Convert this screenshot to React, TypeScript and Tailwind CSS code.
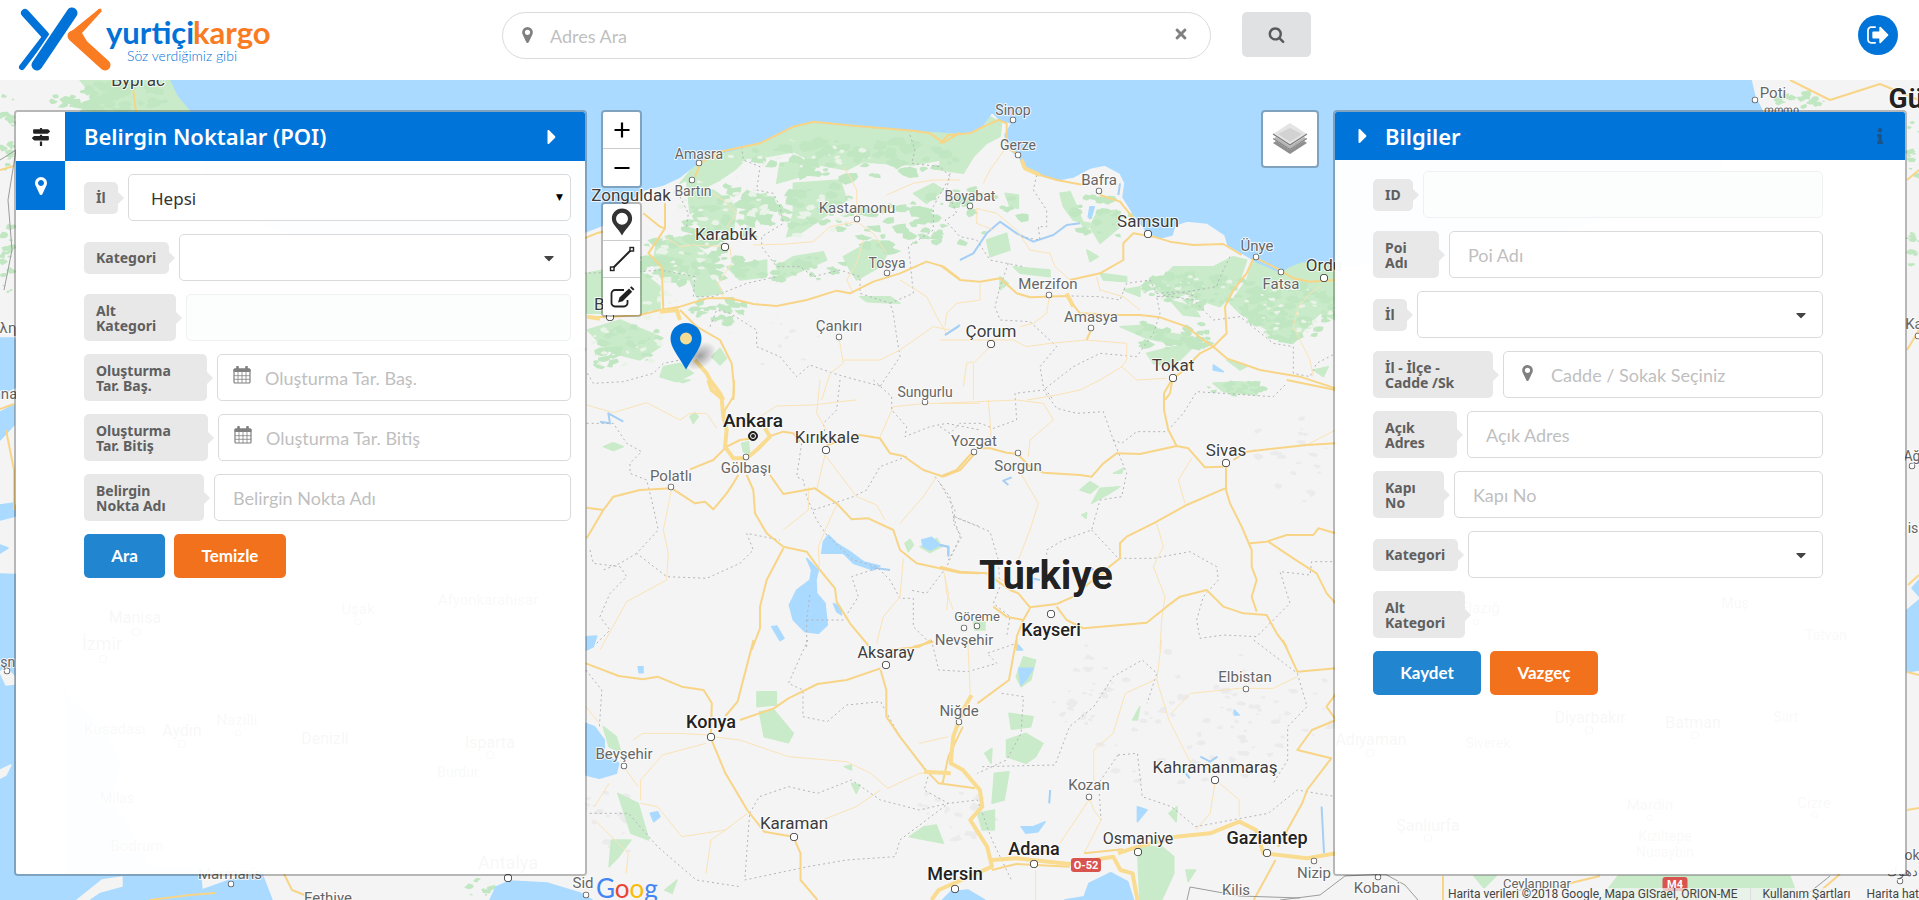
import React from "react";
import { FaMapSigns, FaTimes, FaInfo, FaCaretDown, FaCaretRight } from "react-icons/fa";

/* ---------- icons ---------- */

function PinIcon({ className }: { className: string }) {
  return (
    <svg viewBox="384 128 1024 1536" className={className} fill="currentColor" aria-hidden="true">
      <path d="M1152 640q0-106-75-181t-181-75-181 75-75 181 75 181 181 75 181-75 75-181zm256 0q0 109-33 179l-364 774q-16 33-47.5 52t-67.5 19-67.5-19-46.5-52l-365-774q-33-70-33-179 0-212 150-362t362-150 362 150 150 362z" />
    </svg>
  );
}

function SearchIcon() {
  return (
    <svg viewBox="0 0 1792 1792" className="h-[17px] w-[17px]" fill="currentColor" aria-hidden="true">
      <path d="M1216 832q0-185-131.5-316.5t-316.5-131.5-316.5 131.5-131.5 316.5 131.5 316.5 316.5 131.5 316.5-131.5 131.5-316.5zm512 832q0 52-38 90t-90 38q-54 0-90-38l-343-342q-179 124-399 124-143 0-273.5-55.5t-225-150-150-225-55.5-273.5 55.5-273.5 150-225 225-150 273.5-55.5 273.5 55.5 225 150 150 225 55.5 273.5q0 220-124 399l343 343q37 37 37 90z" />
    </svg>
  );
}

function SignOutIcon() {
  return (
    <svg viewBox="64 160 1600 1472" className="h-5 w-[22px]" fill="currentColor" aria-hidden="true">
      <path d="M704 1440q0 4 1 20t.5 26.5-3 23.5-10 19.5-20.5 6.5h-320q-119 0-203.5-84.5t-84.5-203.5v-704q0-119 84.5-203.5t203.5-84.5h320q13 0 22.5 9.5t9.5 22.5q0 4 1 20t.5 26.5-3 23.5-10 19.5-20.5 6.5h-320q-66 0-113 47t-47 113v704q0 66 47 113t113 47h312l11.5 1 11.5 3 8 5.5 7 9 2 13.5zm928-544q0 26-19 45l-544 544q-19 19-45 19t-45-19-19-45v-288h-448q-26 0-45-19t-19-45v-384q0-26 19-45t45-19h448v-288q0-26 19-45t45-19 45 19l544 544q19 19 19 45z" />
    </svg>
  );
}

function CalendarIcon({ className }: { className: string }) {
  return (
    <svg viewBox="0 0 18 18" className={className} fill="none" stroke="currentColor" aria-hidden="true">
      <rect x="1" y="3" width="16" height="14" rx="1" strokeWidth="1.2" />
      <path d="M1 3h16v2.500H1z" fill="currentColor" />
      <path d="M4.5 1v3.5M13.5 1v3.5" strokeWidth="2.6" strokeLinecap="round" />
      <path d="M5 6v11M9 6v11M13 6v11M1 9.7h16M1 13.3h16" strokeWidth="0.8" />
    </svg>
  );
}

function LayersIcon() {
  return (
    <svg viewBox="0 0 36 34" className="h-[34px] w-9" aria-hidden="true">
      <path d="M1 21l17 11 17-11-3-2-14 9-14-9z" fill="#8f8f8f" />
      <path d="M1 17l17 11 17-11-3-2-14 9-14-9z" fill="#b4b4b4" />
      <path d="M1 16.500l17 11 17-11" fill="none" stroke="#7d7d7d" />
      <path d="M1 12l17 11 17-11L18 1z" fill="#e4e4e4" />
      <path d="M6 12l12-6 12 6-12 8z" fill="#d2d2d2" />
      <path d="M1 12l17 11 17-11" fill="none" stroke="#7d7d7d" strokeWidth="1.4" />
    </svg>
  );
}

function Logo() {
  return (
    <svg viewBox="0 0 256 66" className="h-[66px] w-64" role="img" aria-label="Yurtiçi Kargo">
      <g fill="none" strokeLinecap="round" strokeLinejoin="round">
        <path d="M7 6L27 28" stroke="#0072d8" strokeWidth="8" />
        <path d="M27 30L4 60" stroke="#0072d8" strokeWidth="6" />
        <path d="M54 6L19 58" stroke="#fff" strokeWidth="14" />
        <path d="M54 6L19 58" stroke="#0072d8" strokeWidth="11" />
        <path d="M82 3L54 28" stroke="#f97b22" strokeWidth="3" />
        <path d="M55 29L87 58" stroke="#f97b22" strokeWidth="11" />
      </g>
      <path d="M50 27L81 2l3 2-20 22 6 10z" fill="#f97b22" />
      <g fontFamily="Lato, sans-serif" fontWeight="700" fontSize="31">
        <text x="88" y="37" fill="#0072d8">yurtiçi</text>
        <text x="175" y="37" fill="#f97b22">kargo</text>
      </g>
      <text x="109" y="54" fontFamily="Lato, sans-serif" fontSize="14" fontWeight="300" fill="#0072d8">
        Söz verdiğimiz gibi
      </text>
    </svg>
  );
}

/* ---------- map ---------- */

type Sheet = {
  transform: string;
  green: string[];
  water: string[];
  river: string[];
  minor: string[];
  major: string[];
  wide: string[];
  border: string[];
};

const SHEETS: Sheet[] = [
  {
    transform: "translate(580 80) scale(.33333)",
    green: [
      "300,310 345,255 420,215 500,200 560,180 640,140 700,126 820,138 1000,152 1140,160 1140,265 1080,240 1000,255 900,250 850,245 800,270 720,255 690,240 640,215 560,230 500,235 470,265 420,300 380,320 420,350 400,380 330,400 320,300",
      "340,350 400,330 470,380 460,450 390,460 350,430",
      "640,310 780,300 800,360 720,420 660,460 620,470 640,400",
      "230,490 300,470 350,500 400,540 400,590 430,640 350,650 330,600 260,590 220,540",
      "20,580 70,570 190,580 240,620 240,690 180,700 20,700",
      "22,750 120,720 240,770 240,800 180,840 100,820 60,790",
      "250,860 300,850 340,880 290,905 240,890",
      "440,560 560,540 560,590 480,600",
      "590,560 640,530 730,515 740,540 660,575 600,600",
      "790,530 880,480 940,490 900,560 830,600 810,570",
      "840,650 930,650 960,670 860,665",
      "395,830 420,805 440,835 420,855",
      "1000,340 1060,310 1090,330 1040,370",
      "600,250 690,240 660,290 590,310",
      "510,350 560,340 540,400 490,430",
    ],
    water: [],
    river: ["1095,765 1140,735"],
    minor: [
      "450,500 455,550 415,610 430,650",
      "520,495 620,492 700,485 750,440 830,425 830,330 810,290 790,260",
      "830,425 880,460 920,520",
      "920,345 1000,310 1060,300 1140,300",
      "820,640 800,600 830,550 850,480",
      "778,780 790,850 750,880 725,960",
      "790,840 900,840 960,810 1060,740 1110,750",
      "960,600 1040,650 1070,710 1100,760",
      "255,470 300,500 340,495 430,500",
      "380,330 430,360 470,400 440,440",
    ],
    major: [
      "22,710 80,712 180,705 240,690 300,680 380,655 450,655 520,672 590,678 680,660 770,632 810,640 880,605 960,580 1040,545 1090,560 1140,598",
      "190,400 240,440 255,445 255,370",
      "255,445 205,520 245,560 250,690",
      "300,690 350,740 420,780 455,850 462,920 460,960",
      "350,255 420,215 540,190 640,140 700,125 820,137 1000,152 1050,160 1090,188 1140,158",
      "0,480 50,460 90,450",
      "345,290 362,250",
    ],
    wide: ["345,840 380,880 390,900 420,940 430,960", "22,710 60,716", "240,695 290,690 300,720"],
    border: [
      "485,200 490,240 540,260 530,330 580,340 600,380 610,430 545,470 545,500 590,560 660,560 700,590 780,570 840,590 840,640 930,670",
      "990,165 1005,210 995,250 1080,260 1110,290 1060,380 1060,450 985,500 990,540 1000,640 930,670 940,700 950,770 960,830 900,920",
      "300,350 325,400 320,440",
      "340,650 345,590 240,570 180,575 0,580",
      "350,650 400,650 500,610 590,590",
      "390,740 410,690 450,700 530,750 530,800 600,830 650,890 690,855 760,880 830,900 900,918",
      "22,880 40,910 130,905 220,880 250,850 300,840",
    ],
  },
  {
    transform: "translate(940 80) scale(.33333)",
    green: [
      "0,170 130,145 150,110 185,130 180,170 140,190 100,230 70,280 0,270",
      "195,340 235,345 235,385 210,380",
      "360,340 390,335 410,380 430,430 400,420 370,380",
      "470,400 530,390 540,440 480,490 450,440",
      "140,480 200,460 210,510 150,530",
      "640,620 700,560 820,560 880,530 920,540 900,600 870,650 840,680 780,660 740,640 690,660",
      "940,540 1010,570 1060,550 1130,540 1187,560 1187,720 1140,700 1100,740 1060,790 1000,760 900,700 870,670 920,600",
      "690,660 760,680 780,710 730,705",
      "540,740 620,735 690,760 760,770 740,800 620,775",
      "620,820 700,800 760,800 700,860 640,850",
      "480,580 560,590 560,605 490,600",
      "550,630 600,620 600,650",
      "1120,870 1165,860 1150,890",
      "220,560 330,570 330,590 240,580",
      "860,840 920,860 900,870",
      "820,910 960,905 950,945 850,935",
      "180,590 205,610 180,630",
      "440,510 475,530 450,545",
      "420,425 450,430 440,455",
    ],
    water: ["450,380 463,380 453,415 445,410", "820,855 850,875 820,870"],
    river: ["60,540 100,520 140,460 180,425 230,460 280,485 340,465 380,435 420,430", "15,765 55,740", "540,310 535,345"],
    minor: [
      "200,200 150,270 130,310",
      "110,385 110,430 160,450",
      "110,385 170,400 230,450 270,510 330,520 345,560 390,600",
      "120,610 120,660 50,670 20,700 15,740",
      "328,650 320,700 280,730 240,740",
      "0,780 220,780 260,800 330,790 440,780 560,790 560,840 545,860 480,900 420,930 350,945 260,960",
      "545,860 590,900 680,895",
      "100,960 100,850 150,800",
      "100,845 80,850 70,920",
      "470,590 480,630 550,650 600,690",
      "1140,620 1110,640 1075,680 1060,740 1110,840 1120,890",
    ],
    major: [
      "0,555 60,600 120,605 180,595 230,640 270,652 380,648",
      "390,600 480,580 550,540 550,490 580,460 640,470 690,485 760,495 850,492 905,525",
      "380,650 420,700 540,705 600,705 660,712 740,740 790,780 820,800 860,835 960,870 1080,890 1187,925",
      "820,800 780,820 720,880 698,895 690,940 675,960",
      "480,345 540,365 580,415",
      "245,235 250,260 300,285 350,300 430,315",
      "0,190 25,165 90,160 130,140 175,120 200,130 200,200 235,225",
      "950,535 1020,570 1060,595 1110,605 1187,600",
      "455,745 440,780",
      "820,800 860,760 855,680 880,630 920,580 940,535",
    ],
    wide: ["380,640 400,680", "245,240 255,265 300,285"],
    border: [
      "30,280 20,330 50,400 15,420 60,470 110,480 150,540 250,560",
      "290,285 280,330 320,390 320,440 295,440 300,480 240,470",
      "205,550 180,620 165,680 180,720 270,725 350,800 300,860 310,920 340,960",
      "395,648 480,650 540,660 560,610 630,600 650,640 720,635 770,650",
      "870,530 840,590 830,620 650,650 660,700 640,760 590,830 480,820 400,860 310,930",
      "650,650 700,650 760,660 820,720 900,710 1000,790 1060,800 1060,880 1110,890 1130,850 1187,820",
    ],
  },
  {
    transform: "translate(580 380) scale(.33333)",
    green: [
      "70,200 100,188 130,200 100,212",
      "330,110 345,98 355,110 340,130",
      "975,490 990,478 1000,495 985,515",
      "1020,500 1070,475 1085,500 1050,518",
      "285,0 330,0 310,8",
      "485,190 505,185 510,225 490,215",
    ],
    water: [
      "680,535 715,570 708,600 710,640 735,670 742,735 715,760 675,755 640,720 628,675 650,630 690,600 695,570",
      "745,465 770,490 810,515 850,545 900,558 880,570 820,550 790,520 725,520 730,485",
      "1025,480 1055,472 1080,495 1050,510 1030,500",
      "575,740 590,738 612,775 600,782",
      "20,770 50,768 40,800 20,810",
      "760,670 780,680 785,705 770,695",
    ],
    river: ["60,125 90,130 85,100 130,125", "870,562 930,570", "1080,495 1105,500 1105,530"],
    minor: [
      "20,75 100,98 200,68 300,120 330,100 380,100 410,145",
      "540,110 590,78 700,75 780,65 830,60",
      "720,0 710,100 740,150",
      "735,225 710,330",
      "735,225 830,350 890,375 915,420",
      "685,320 685,390 610,450",
      "770,375 740,440 715,500 718,560",
      "275,325 250,450 265,520 260,600 140,665 60,810",
      "900,170 940,80 1040,70 1200,70",
      "1070,290 1030,350 960,430",
      "970,535 960,650 910,710 890,790",
      "1090,570 1105,640 1100,690",
    ],
    major: [
      "20,383 70,390 100,350 180,330 275,325 345,370 375,365 400,388 440,340 460,310 475,285",
      "70,390 20,475",
      "330,268 400,240 440,200 480,180 520,175",
      "462,0 460,50 435,90 430,120",
      "565,170 610,155 640,160 660,185",
      "500,285 520,330 525,400 560,460 610,500 680,515 720,570 765,625 770,665 810,730 860,790 875,810",
      "610,505 560,600 540,680 540,745 515,810",
      "570,285 610,342 705,325 770,370 815,418 865,415 940,450 960,510 1010,550 1140,578 1200,580",
      "740,195 840,165 900,175 930,220 970,228 1030,270 1090,290 1140,270 1185,220",
      "1000,800 1060,785",
    ],
    wide: ["385,0 395,30 425,55 430,110 440,150 435,200 460,235 500,235 530,210 570,170 555,145"],
    border: [
      "780,0 770,90 730,130 735,160",
      "880,0 935,50 935,90 980,140 975,170 1050,140 1100,130 1200,150",
      "20,130 100,130 140,190 185,215 150,250 150,280 200,300 215,360 235,450 170,520 260,590 380,595 480,550 520,510 500,460 600,480",
      "30,510 40,550 120,560 140,590 90,640 60,710 90,750 50,790",
      "170,520 120,550 70,570",
      "665,190 650,290 670,300 680,350 710,420 740,465 820,540 890,560 930,600 960,655 1000,655 1000,740 1050,790",
      "980,230 900,260 860,330 820,350 700,390",
      "1065,290 1110,350 1120,410 1200,440",
      "1120,410 1140,470 1100,560 1040,640 990,630",
      "890,565 815,590 835,650 790,720 680,720 690,640",
      "680,720 680,810",
    ],
  },
  {
    transform: "translate(940 380) scale(.33333)",
    green: [
      "420,330 450,305 475,320 450,340",
      "455,370 480,325 540,320 500,345",
      "520,280 550,265 545,280",
      "425,405 440,398 438,415",
      "820,10 900,5 960,20 950,40 860,30",
      "100,725 135,725 135,750 105,750",
    ],
    water: ["235,795 248,810 230,810"],
    river: ["205,315 190,302 215,292", "280,610 275,595 300,600", "440,580 460,565", "0,495 25,500 25,525"],
    minor: [
      "145,60 150,120 155,200",
      "245,285 295,370 270,450 235,540",
      "265,230 270,180 340,120 310,70 230,60 0,70",
      "755,235 715,300 735,370",
      "650,430 670,500 640,560 675,650 665,720 660,810",
      "15,590 20,640 40,690",
      "140,580 210,610",
      "1187,150 1100,195",
    ],
    major: [
      "0,290 50,270 90,225 105,215",
      "110,205 150,205 200,218 235,222",
      "235,225 270,260 310,278 420,285 455,290 490,250 530,220 600,222 710,198 745,205 795,262 850,260",
      "695,0 672,40 672,90 685,150 710,198",
      "858,250 858,330 870,370 905,440 935,510 935,560 950,600 935,650 950,695",
      "855,325 740,375 640,430 560,470 540,490 540,535 470,590 400,650 350,672",
      "0,560 60,575 140,580 210,630 235,640 270,682 350,672",
      "270,685 250,720 230,770 230,810",
      "350,680 380,720 430,745 620,728 680,680 720,650 800,630 850,680 910,700 980,705 1010,760 1040,800",
      "930,490 980,485 1040,465 1120,465 1135,445 1187,460",
      "985,485 1060,535 1130,580 1160,640 1187,670",
      "880,240 920,215 1100,195 1187,190",
      "1040,0 1187,30",
      "160,680 200,710 250,720",
    ],
    wide: ["470,590 500,570"],
    border: [
      "0,140 30,160 60,130 120,130 160,145 230,120 225,40 310,30 350,85 410,100 490,95 520,180 545,190 590,155 680,155 730,100 770,35 1000,50 1040,10",
      "520,180 560,280 545,350 480,360 455,450 370,480 320,510 320,540",
      "455,450 535,535 640,535 750,515 830,560 835,600 790,650 770,720 780,775 850,765 950,770 1050,670 1020,575 1110,585 1115,545 1187,545",
      "0,310 45,390 40,430 65,470 25,540",
      "45,410 150,455 175,540 180,620 160,670 210,710 200,770",
    ],
  },
  {
    transform: "translate(580 640) scale(.4847 .33333)",
    green: [
      "365,155 405,155 405,195 365,200",
      "370,215 400,210 440,280 430,308 380,290",
      "915,50 940,60 930,120 910,140 900,110",
      "885,220 935,230 930,260 890,268",
      "880,300 920,280 955,310 940,350 920,370 880,350",
      "835,340 850,325 848,370",
      "855,400 885,395 880,440 875,480 850,490",
      "680,590 710,560 735,555 750,610",
      "820,520 855,510 855,570 830,570",
      "48,260 75,290 85,340 60,320",
      "78,460 120,490 142,600 105,580",
      "65,600 105,600 80,650 60,680",
      "1150,620 1200,620 1225,650 1225,700 1200,780 1155,780",
      "1140,240 1155,200 1150,240",
      "1215,520 1232,500 1230,545",
      "1250,690 1270,690 1255,725",
      "560,430 578,435 570,460",
      "545,380 560,375 560,390",
      "175,750 200,720 190,760",
    ],
    water: [
      "12,250 30,260 50,300 50,340 80,370 75,400 40,415 12,405",
      "145,520 160,515 165,530 152,545",
      "905,85 935,85 920,120 910,135",
      "910,560 935,560 960,545 945,575 920,580",
      "1150,500 1170,510 1150,545",
      "120,80 130,80 130,98 122,98",
      "748,780 765,755 800,750 835,780",
      "1000,780 1040,770 1050,730 1095,698 1130,725 1142,780",
      "1350,210 1360,225 1350,225",
    ],
    river: ["1280,350 1300,365 1315,350", "1530,500 1535,640", "970,450 968,490", "1250,400 1258,415"],
    minor: [
      "270,290 330,300 430,350 550,365 600,400 635,445 700,400 760,395",
      "270,285 200,280 130,280 110,300",
      "260,310 170,345 125,420 125,480",
      "620,450 570,500 500,540",
      "345,520 300,570 210,590 160,500 125,490",
      "90,380 120,440",
      "30,500 60,430",
      "1050,470 1060,510 1075,540 1040,640",
      "1050,480 990,610",
      "1185,120 1125,160 1100,280 1060,330 1060,430",
      "1200,0 1190,120 1215,240 1260,370",
      "1220,220 1260,160 1360,145 1430,145 1480,110",
      "1310,430 1300,520 1270,570",
      "1320,430 1360,480 1360,530",
      "30,540 100,640 95,700",
      "310,560 270,600 260,700",
      "940,690 940,780",
      "700,310 760,290",
      "800,0 805,160",
      "12,200 40,250",
    ],
    major: [
      "12,70 80,108 130,118 160,110 210,140 255,150 272,190 270,280",
      "300,228 325,185 358,0",
      "330,240 400,205 430,175 490,132 550,120 620,85",
      "620,90 632,150 632,230 660,290 710,385 740,430 815,445",
      "790,260 760,350 748,430",
      "900,0 885,120 820,190",
      "270,295 300,400 345,510 380,575 440,590 455,640 455,720 490,780",
      "1450,0 1480,95 1560,85",
      "1560,240 1510,270 1480,330 1550,355 1500,450 1490,490 1440,620",
      "1435,660 1390,780",
      "850,690 900,672 1010,680",
      "1040,640 1120,628",
      "1560,160 1540,200 1560,240",
      "640,30 700,20 725,0",
    ],
    wide: [
      "808,165 790,210 770,290 765,370 790,390 825,450 830,500 805,540 840,620 850,680 740,750 725,780",
      "710,395 765,400",
      "850,660 900,655 1010,672 1100,650 1115,690 1140,700 1150,780",
      "1110,640 1140,625 1230,590 1300,580 1360,545 1395,570 1410,640 1500,655 1560,640",
    ],
    border: [
      "470,0 430,130 460,150 460,230 510,245 550,195 620,185 660,290 720,400 710,450 760,490 660,600 650,650 550,660 470,680 340,720 350,520",
      "350,520 370,470 430,440 490,460 560,420 620,480 700,510 760,490 820,480 850,600 890,720",
      "12,90 45,150 40,260",
      "20,520 100,520 160,620 240,720 330,740",
      "725,0 740,90 800,95 860,70 840,40 900,10",
      "870,160 915,170 910,280 880,360 820,400",
      "830,380 980,375 1010,260 1060,200 1100,110 1160,60 1190,100 1170,190",
      "1390,0 1480,100 1500,200 1460,260 1460,360 1430,430",
      "1110,345 1150,340 1160,470 1220,500 1270,560 1420,520 1480,450 1560,470",
      "1110,345 1070,430 1075,540",
    ],
  },
];

/* Ragged cover of small blobs: cx, cy, rx, ry, count, blob radius */
const FOREST: number[][] = [
  [850, 160, 110, 20, 70, 5],
  [730, 215, 50, 30, 45, 5],
  [820, 210, 40, 25, 34, 5],
  [690, 260, 60, 25, 50, 5],
  [790, 270, 60, 14, 34, 4],
  [900, 230, 50, 28, 34, 5],
  [620, 345, 50, 25, 34, 4],
  [720, 310, 30, 14, 22, 4],
  [970, 215, 60, 30, 26, 4],
  [1110, 215, 40, 22, 22, 4],
  [1200, 290, 60, 18, 60, 4],
  [1290, 310, 46, 30, 90, 4],
  [1170, 335, 50, 14, 30, 4],
  [1235, 388, 30, 6, 22, 3],
  [110, 98, 60, 16, 60, 5],
  [1800, 100, 30, 8, 18, 3],
  [1914, 190, 8, 80, 20, 3],
  [6, 110, 12, 60, 20, 3],
  [8, 260, 10, 40, 20, 3],
  [250, 886, 14, 8, 14, 3],
  [480, 888, 12, 10, 12, 3],
];

const CLEARINGS: number[][] = [
  [800, 150, 100, 18, 22, 2],
  [720, 200, 50, 30, 24, 3],
  [680, 260, 50, 25, 22, 3],
  [640, 300, 50, 20, 18, 3],
  [620, 345, 45, 22, 16, 3],
  [1290, 310, 46, 30, 34, 2],
  [1190, 290, 50, 16, 20, 2],
  [820, 215, 40, 25, 14, 3],
];

const HILLS: number[][] = [
  [1190, 720, 110, 70, 60, 3],
  [960, 810, 40, 30, 24, 3],
  [1290, 460, 40, 50, 20, 3],
  [610, 820, 30, 40, 18, 3],
  [1280, 700, 60, 60, 26, 3],
  [780, 340, 60, 25, 12, 2],
  [1080, 690, 30, 50, 20, 3],
];

function scatter(regions: number[][], start: number) {
  let seed = start;
  const rnd = () => {
    seed = (seed * 16807) % 2147483647;
    return seed / 2147483647;
  };
  let d = "";
  for (const [cx, cy, rx, ry, n, size] of regions) {
    for (let i = 0; i < n; i++) {
      const a = rnd() * Math.PI * 2;
      const k = Math.sqrt(rnd());
      const x = cx + Math.cos(a) * rx * k;
      const y = cy + Math.sin(a) * ry * k;
      const s = size * (0.4 + rnd());
      for (let j = 0; j < 7; j++) {
        const t = (j / 7) * Math.PI * 2;
        const r = s * (0.5 + rnd() * 0.8);
        d += `${j ? "L" : "M"}${(x + Math.cos(t) * r * 1.4).toFixed(1)} ${(y + Math.sin(t) * r * 0.8).toFixed(1)}`;
      }
      d += "Z";
    }
  }
  return d;
}

const FOREST_PATH = scatter(FOREST, 7);
const CLEARING_PATH = scatter(CLEARINGS, 41);
const HILL_PATH = scatter(HILLS, 99);

/* name, x, y, size, weight, dot x, dot y */
type Place = [string, number, number, number, number, number?, number?];

const PLACES: Place[] = [
  ["Sinop", 1013, 110, 14, 400, 1013, 120],
  ["Gerze", 1018, 145, 14, 400, 1018, 155],
  ["Amasra", 699, 154, 14, 400, 699, 163],
  ["Bartın", 693, 191, 14, 400, 692, 180],
  ["Zonguldak", 631, 195, 17, 400],
  ["Karabük", 726, 234, 17, 400, 725, 247],
  ["Kastamonu", 857, 208, 15, 400, 857, 219],
  ["Boyabat", 970, 196, 14, 400, 970, 206],
  ["Bafra", 1099, 180, 15, 400, 1099, 191],
  ["Samsun", 1148, 221, 17, 400, 1148, 234],
  ["Ünye", 1257, 246, 15, 400, 1256, 257],
  ["Ordu", 1324, 265, 17, 400, 1324, 278],
  ["Fatsa", 1281, 284, 15, 400, 1281, 272],
  ["Tosya", 887, 263, 14, 400, 887, 273],
  ["Merzifon", 1048, 284, 15, 400, 1049, 295],
  ["Amasya", 1091, 317, 15, 400, 1091, 328],
  ["Çankırı", 839, 326, 15, 400, 839, 337],
  ["Çorum", 991, 331, 17, 400, 991, 344],
  ["Tokat", 1173, 365, 17, 400, 1173, 378],
  ["Sungurlu", 925, 392, 14, 400, 925, 402],
  ["Ankara", 753, 420, 19, 500],
  ["Kırıkkale", 827, 437, 17, 400, 826, 450],
  ["Gölbaşı", 746, 468, 15, 400, 746, 457],
  ["Polatlı", 671, 476, 15, 400, 671, 487],
  ["Yozgat", 974, 441, 15, 400, 974, 452],
  ["Sorgun", 1018, 466, 15, 400, 1018, 453],
  ["Sivas", 1226, 450, 17, 400, 1226, 463],
  ["Türkiye", 1046, 575, 40, 700],
  ["Göreme", 977, 616, 13, 400, 977, 626],
  ["Nevşehir", 964, 640, 15, 400, 964, 628],
  ["Kayseri", 1051, 630, 18, 500, 1051, 614],
  ["Aksaray", 886, 652, 16, 400, 886, 665],
  ["Elbistan", 1245, 677, 15, 400, 1246, 689],
  ["Niğde", 959, 711, 15, 400, 959, 722],
  ["Konya", 711, 722, 18, 500, 711, 737],
  ["Beyşehir", 624, 754, 15, 400, 624, 766],
  ["Kahramanmaraş", 1215, 767, 17, 400, 1215, 780],
  ["Kozan", 1089, 785, 15, 400, 1089, 797],
  ["Karaman", 794, 823, 17, 400, 794, 837],
  ["Osmaniye", 1138, 838, 16, 400, 1138, 852],
  ["Adana", 1034, 849, 18, 500, 1034, 864],
  ["Gaziantep", 1267, 838, 18, 500, 1267, 853],
  ["Mersin", 955, 874, 18, 500, 955, 889],
  ["Kilis", 1236, 890, 15, 400],
  ["Nizip", 1314, 873, 15, 400, 1314, 861],
  ["Kobani", 1377, 888, 15, 400, 1378, 877],
  ["Ceylanpınar", 1537, 883, 13, 400],
  ["Sid", 583, 883, 15, 400, 586, 895],
  ["Bolu", 611, 304, 17, 400, 610, 317],
  ["Antalya", 508, 863, 18, 400, 508, 878],
  ["Marmaris", 230, 874, 15, 400, 231, 884],
  ["Fethiye", 328, 898, 15, 400],
  ["Бургас", 138, 80, 17, 400],
  ["Poti", 1773, 93, 15, 400, 1755, 100],
  ["ფოთი", 1781, 110, 12, 400],
  ["Gü", 1906, 98, 28, 700],
  ["λη", 8, 328, 15, 400],
  ["ana", 5, 394, 15, 400],
  ["eşn", 4, 662, 14, 400, 7, 671],
  ["Ka", 1914, 324, 15, 400, 1918, 336],
  ["Ağrı", 1916, 456, 14, 400, 1912, 466],
  ["is", 1913, 528, 14, 400],
  ["ok", 1912, 855, 14, 400, 1900, 881],
  ["دهوك", 1902, 871, 13, 400],
  ["Manisa", 135, 617, 16, 400, 136, 632],
  ["İzmir", 102, 644, 18, 400, 103, 659],
  ["Kuşadası", 115, 729, 15, 400],
  ["Aydın", 182, 730, 16, 400, 182, 744],
  ["Nazilli", 237, 720, 15, 400, 238, 733],
  ["Denizli", 325, 738, 16, 400],
  ["Isparta", 490, 742, 16, 400, 490, 755],
  ["Burdur", 458, 772, 14, 400],
  ["Milas", 117, 798, 14, 400],
  ["Bodrum", 137, 846, 15, 400],
  ["Uşak", 358, 609, 15, 400, 358, 622],
  ["Afyonkarahisar", 488, 600, 15, 400],
  ["Batman", 1693, 722, 16, 400, 1695, 735],
  ["Diyarbakır", 1590, 717, 16, 400, 1589, 730],
  ["Siverek", 1488, 743, 14, 400],
  ["Adıyaman", 1371, 739, 16, 400, 1370, 753],
  ["Mardin", 1650, 805, 15, 400, 1650, 818],
  ["Şanlıurfa", 1428, 825, 16, 400, 1428, 838],
  ["Kızıltepe", 1665, 836, 14, 400],
  ["Nusaybin", 1665, 852, 14, 400],
  ["Cizre", 1814, 803, 15, 400, 1815, 815],
  ["Siirt", 1786, 717, 14, 400],
  ["Muş", 1735, 603, 14, 400],
  ["Tatvan", 1826, 635, 14, 400],
  ["Elazığ", 1480, 608, 15, 400, 1476, 622],
];

const BLACK_SEA =
  "171,80 178,95 192,112 210,200 350,260 470,262 560,242 580,234 603,225 625,205 643,190 663,185 680,177 695,165 713,155 740,148 767,140 793,127 813,122 853,126 913,130 960,133 973,132 983,125 992,112 1000,120 1012,123 1005,135 1007,147 1020,158 1023,167 1040,174 1057,180 1073,177 1090,168 1105,165 1120,173 1125,183 1123,197 1133,213 1147,232 1160,238 1172,235 1175,225 1187,221 1207,223 1225,235 1228,245 1242,253 1257,262 1280,272 1288,267 1300,262 1317,260 1336,267 1500,250 1700,190 1763,112 1755,97 1751,80";

const SEAS = [
  BLACK_SEA,
  "0,338 14,338 30,350 20,385 6,392 0,390",
  "0,412 14,405 14,425 0,440",
  "0,505 14,503 20,515 0,520",
  "0,545 8,548 0,553",
  "0,574 30,575 70,700 95,720 120,760 110,800 130,830 150,868 200,868 202,890 230,880 262,874 272,900 0,900",
  "490,900 496,887 510,881 547,883 580,893 592,900",
  "1907,610 1919,600 1919,670 1907,672",
  "1912,588 1919,580 1919,596",
];

const ISLANDS = ["77,900 102,880 122,877 122,886 100,892 88,900", "0,672 6,668 14,676 14,684 6,685", "0,770 11,765 6,775 0,778"];

const OUTER_ROADS = [
  "136,112 132,80",
  "0,170 14,166",
  "0,409 14,404",
  "6,430 14,470 14,510",
  "284,874 292,890 312,898",
  "150,900 190,895 215,893",
  "1790,80 1830,100 1880,84 1919,100",
  "1907,180 1919,170",
  "1907,672 1919,675",
  "1907,810 1919,808",
  "1907,350 1919,330",
  "1908,585 1919,575",
  "1840,874 1810,900",
  "1443,876 1443,900",
  "1550,888 1600,876",
];

function Lines({ points, stroke, width, dash }: { points: string[]; stroke: string; width: number; dash?: string }) {
  return (
    <g fill="none" stroke={stroke} strokeWidth={width} strokeDasharray={dash} strokeLinejoin="round">
      {points.map((p) => (
        <polyline key={p} points={p} vectorEffect="non-scaling-stroke" />
      ))}
    </g>
  );
}

function Areas({ points, fill }: { points: string[]; fill: string }) {
  return (
    <g fill={fill} stroke={fill} strokeWidth="1.5" strokeLinejoin="round">
      {points.map((p) => (
        <polygon key={p} points={p} vectorEffect="non-scaling-stroke" />
      ))}
    </g>
  );
}

function RoadBadge({ x, y, w, text }: { x: number; y: number; w: number; text: string }) {
  return (
    <g>
      <rect x={x - w / 2} y={y - 7} width={w} height="14" rx="3" fill="#d9534f" />
      <text x={x} y={y + 4} textAnchor="middle" fontSize="11" fontWeight="700" fill="#fff">
        {text}
      </text>
    </g>
  );
}

function MapCanvas() {
  return (
    <svg
      viewBox="0 80 1919 820"
      preserveAspectRatio="xMidYMid slice"
      className="absolute inset-0 h-full w-full"
      fontFamily="Roboto, sans-serif"
      role="img"
      aria-label="Türkiye haritası"
    >
      <defs>
        <radialGradient id="pinShade">
          <stop offset="0" stopColor="#000" stopOpacity=".35" />
          <stop offset="1" stopColor="#000" stopOpacity="0" />
        </radialGradient>
      </defs>
      <rect x="0" y="80" width="1919" height="820" fill="#f4f4f4" />
      <path d={HILL_PATH} fill="#ebebec" />
      {SHEETS.map((s) => (
        <g key={s.transform + "g"} transform={s.transform}>
          <Areas points={s.green} fill="#c9ebc9" />
        </g>
      ))}
      <Areas
        points={["80,80 171,80 192,112 80,112 95,98", "1618,876 1790,876 1795,890 1780,900 1600,900", "1474,876 1496,876 1484,888"]}
        fill="#c9ebc9"
      />
      <path d={FOREST_PATH} fill="#c0e7c2" />
      <path d={CLEARING_PATH} fill="#eaf3e8" />
      <Areas points={SEAS} fill="#aadaff" />
      <Areas points={ISLANDS} fill="#f4f4f3" />
      {SHEETS.map((s) => (
        <g key={s.transform + "r"} transform={s.transform}>
          <Areas points={s.water} fill="#aadaff" />
          <Lines points={s.river} stroke="#a5cff5" width={2} />
          <Lines points={s.border} stroke="#b4b4b8" width={1} dash="2 3" />
          <Lines points={s.minor} stroke="#fbe3b6" width={1} />
          <Lines points={s.major} stroke="#f8d586" width={2} />
          <Lines points={s.wide} stroke="#f9dc8f" width={4} />
        </g>
      ))}
      <Lines points={OUTER_ROADS} stroke="#f8d586" width={2} />
      <Lines
        points={["1187,900 1190,887 1240,896 1300,898", "1280,900 1320,895 1345,876 1385,874 1405,885 1418,900", "0,160 16,150 8,200 12,250 4,290", "1800,900 1830,876"]}
        stroke="#9c9c9c"
        width={1}
      />
      <g textAnchor="middle" stroke="#fff" strokeLinejoin="round" paintOrder="stroke">
        {PLACES.map(([name, x, y, size, weight, dx, dy]) => (
          <g key={name}>
            {dx !== undefined && (
              <circle cx={dx} cy={dy} r={size > 15 ? 3.2 : 2.4} fill="#fff" stroke={size > 15 ? "#333" : "#666"} strokeWidth="1.6" />
            )}
            <text
              x={x}
              y={y + size * 0.35}
              fontSize={size}
              fontWeight={weight}
              fill={weight > 400 ? "#222" : size > 15 ? "#3c3c3c" : "#666"}
              strokeWidth="2"
              strokeOpacity=".8"
            >
              {name}
            </text>
          </g>
        ))}
      </g>
      <circle cx="753" cy="436" r="4.500" fill="#222" stroke="#222" />
      <circle cx="753" cy="436" r="2.500" fill="#222" stroke="#fff" />
      <RoadBadge x={1086} y={865} w={30} text="O-52" />
      <RoadBadge x={1675} y={884} w={25} text="M4" />
      <ellipse cx="700" cy="356" rx="18" ry="12" fill="url(#pinShade)" transform="rotate(-35 700 356)" />
      <circle cx="686" cy="339" r="7" fill="#f3dc93" />
      <path
        fillRule="evenodd"
        d="M686 323c9 0 15.500 7 15.500 15.500 0 9-7 16-15.500 31-8.500-15-15.500-22-15.500-31C670.500 330 677 323 686 323zm0 9.500a6 6 0 1 0 0 12 6 6 0 0 0 0-12z"
        fill="#0074d9"
      />
    </svg>
  );
}

/* ---------- form pieces ---------- */

type RowProps = {
  id: string;
  label: React.ReactNode;
  labelWidth: string;
  tall?: boolean;
  kind?: "text" | "select" | "native" | "disabled" | "none";
  icon?: "pin" | "calendar";
  placeholder?: string;
};

const FIELD =
  "h-full w-full rounded-[5px] border border-[#dadada] bg-white text-[#333] outline-none placeholder:text-[#bfbfbf]";

function FormRow({ id, label, labelWidth, tall, kind = "text", icon, placeholder }: RowProps) {
  const tag = `relative flex shrink-0 items-center rounded-[5px] bg-[#e8e8e8] pl-3 font-['Noto_Sans',sans-serif] text-sm leading-[15px] font-bold text-[#5f5f5f] ${
    tall ? "h-[47px]" : "h-8"
  } ${labelWidth}`;
  return (
    <div className="flex h-[47px] items-center gap-[10px]">
      <label htmlFor={kind === "none" ? undefined : id} className={tag}>
        {label}
        <span className="absolute top-1/2 -right-1 h-[10px] w-[10px] -translate-y-1/2 rotate-45 bg-[#e8e8e8]" />
      </label>
      {kind !== "none" && (
        <div className="relative h-full min-w-0 flex-1">
          {kind === "native" && (
            <>
              <select
                id={id}
                className={`${FIELD} appearance-none pt-[2px] pl-[22px] font-['Noto_Sans',sans-serif] text-[17px] leading-6`}
              >
                <option>Hepsi</option>
              </select>
              <span className="pointer-events-none absolute inset-y-0 right-2 flex items-center font-['DejaVu_Sans',sans-serif] text-[9px] text-black">
                ▼
              </span>
            </>
          )}
          {kind === "select" && (
            <>
              <select id={id} className={`${FIELD} appearance-none pl-4 text-[17px]`}>
                <option></option>
              </select>
              <FaCaretDown className="pointer-events-none absolute top-4 right-4 h-4 w-3 text-[#444]" />
            </>
          )}
          {kind === "disabled" && (
            <input
              id={id}
              disabled
              className="h-full w-full rounded-[5px] border border-[#f0f1f1] bg-[#fcfdfd] px-4"
            />
          )}
          {kind === "text" && (
            <>
              <input
                id={id}
                type="text"
                placeholder={placeholder}
                className={`${FIELD} pr-4 text-lg ${icon ? "pl-[47px]" : "pl-[18px]"}`}
              />
              {icon === "pin" && <PinIcon className="pointer-events-none absolute top-[14px] left-[19px] h-4 w-[11px] text-[#808080]" />}
              {icon === "calendar" && (
                <CalendarIcon className="pointer-events-none absolute top-3 left-4 h-[18px] w-[18px] text-[#808080]" />
              )}
            </>
          )}
        </div>
      )}
    </div>
  );
}

function ActionButton({ children, className }: { children: React.ReactNode; className: string }) {
  return (
    <button type="button" className={`h-11 cursor-pointer rounded-[5px] text-[17px] font-bold text-white ${className}`}>
      {children}
    </button>
  );
}

function TwoLines({ a, b }: { a: string; b: string }) {
  return (
    <span>
      {a}
      <br />
      {b}
    </span>
  );
}

/* ---------- panels ---------- */

const FRAME = "overflow-hidden rounded border-2 border-black/25 bg-clip-padding";

function PoiPanel() {
  return (
    <section className={`flex ${FRAME}`} aria-label="Belirgin Noktalar">
      <nav className="flex w-[49px] shrink-0 flex-col bg-white">
        <button type="button" aria-label="Yönler" className="flex h-[49px] items-center justify-center text-[#222]">
          <FaMapSigns className="h-5 w-[18px]" />
        </button>
        <button type="button" aria-label="Noktalar" className="flex h-[49px] items-center justify-center bg-[#0074d9] text-white">
          <PinIcon className="h-[18px] w-3" />
        </button>
      </nav>
      <div className="min-w-0 flex-1 bg-white/96">
        <header className="flex h-[49px] items-center justify-between bg-[#0074d9] pr-7 pl-[19px] text-white">
          <h2 className="font-['Noto_Sans',sans-serif] text-[22px] font-semibold">Belirgin Noktalar (POI)</h2>
          <FaCaretRight className="h-6 w-[10px]" />
        </header>
        <form className="flex flex-col gap-[13px] py-[13px] pr-[14px] pl-[19px]">
          <FormRow id="poi-il" label="İl" labelWidth="w-[34px]" kind="native" />
          <FormRow id="poi-kategori" label="Kategori" labelWidth="w-[85px]" kind="select" />
          <FormRow id="poi-alt" label={<TwoLines a="Alt" b="Kategori" />} labelWidth="w-[92px]" tall kind="disabled" />
          <FormRow
            id="poi-bas"
            label={<TwoLines a="Oluşturma" b="Tar. Baş." />}
            labelWidth="w-[123px]"
            tall
            icon="calendar"
            placeholder="Oluşturma Tar. Baş."
          />
          <FormRow
            id="poi-bitis"
            label={<TwoLines a="Oluşturma" b="Tar. Bitiş" />}
            labelWidth="w-[124px]"
            tall
            icon="calendar"
            placeholder="Oluşturma Tar. Bitiş"
          />
          <FormRow
            id="poi-adi"
            label={<TwoLines a="Belirgin" b="Nokta Adı" />}
            labelWidth="w-[120px]"
            tall
            placeholder="Belirgin Nokta Adı"
          />
          <div className="flex gap-[9px]">
            <ActionButton className="w-[81px] bg-[#2185d0]">Ara</ActionButton>
            <ActionButton className="w-28 bg-[#f2711c]">Temizle</ActionButton>
          </div>
        </form>
      </div>
    </section>
  );
}

function InfoPanel() {
  return (
    <section className={FRAME} aria-label="Bilgiler">
      <div className="h-full bg-white/96">
        <header className="flex h-12 items-center bg-[#0074d9] pr-[21px] pl-[23px] text-white">
          <FaCaretRight className="h-6 w-[10px]" />
          <h2 className="ml-[17px] flex-1 font-['Noto_Sans',sans-serif] text-[22px] font-semibold">Bilgiler</h2>
          <FaInfo className="h-4 w-2 text-[#1b5489]" />
        </header>
        <form className="flex flex-col gap-[13px] py-[11px] pr-[82px] pl-[38px]">
          <FormRow id="id" label="ID" labelWidth="w-10" kind="disabled" />
          <FormRow id="adi" label={<TwoLines a="Poi" b="Adı" />} labelWidth="w-[66px]" tall placeholder="Poi Adı" />
          <FormRow id="il" label="İl" labelWidth="w-[34px]" kind="select" />
          <FormRow
            id="cadde"
            label={<TwoLines a="İl - İlçe -" b="Cadde /Sk" />}
            labelWidth="w-[120px]"
            tall
            icon="pin"
            placeholder="Cadde / Sokak Seçiniz"
          />
          <FormRow id="adres" label={<TwoLines a="Açık" b="Adres" />} labelWidth="w-[84px]" tall placeholder="Açık Adres" />
          <FormRow id="kapi" label={<TwoLines a="Kapı" b="No" />} labelWidth="w-[71px]" tall placeholder="Kapı No" />
          <FormRow id="kategori" label="Kategori" labelWidth="w-[85px]" kind="select" />
          <FormRow id="alt" label={<TwoLines a="Alt" b="Kategori" />} labelWidth="w-[92px]" tall kind="none" />
          <div className="flex gap-[9px]">
            <ActionButton className="w-[108px] bg-[#2185d0]">Kaydet</ActionButton>
            <ActionButton className="w-[108px] bg-[#f2711c]">Vazgeç</ActionButton>
          </div>
        </form>
      </div>
    </section>
  );
}

function MapTools() {
  const cell = "flex h-[37px] w-[37px] items-center justify-center bg-white text-[#222]";
  return (
    <div className="flex flex-col items-start gap-[14px]">
      <div className={`flex flex-col ${FRAME}`}>
        <button type="button" aria-label="Yakınlaştır" className={`${cell} border-b border-[#ccc]`}>
          <svg viewBox="0 0 16 16" className="h-4 w-4" stroke="#000" strokeWidth="2.2">
            <path d="M8 0.500v15M0.500 8h15" />
          </svg>
        </button>
        <button type="button" aria-label="Uzaklaştır" className={cell}>
          <svg viewBox="0 0 16 16" className="h-4 w-4" stroke="#000" strokeWidth="2">
            <path d="M0.500 8h15" />
          </svg>
        </button>
      </div>
      <div className={`flex flex-col ${FRAME}`}>
        <button type="button" aria-label="İşaret ekle" className={`${cell} border-b border-[#ccc]`}>
          <svg viewBox="0 0 22 29" className="h-7 w-[22px]" fill="#333">
            <path
              fillRule="evenodd"
              d="M11 0.500c6 0 10.500 4.500 10.500 10.500C21.500 17 16 20 11 28.500 6 20 .5 17 .5 11 .5 5 5 .5 11 .5zM11 5a6.200 6.200 0 1 0 0 12.400A6.200 6.200 0 0 0 11 5z"
            />
          </svg>
        </button>
        <button type="button" aria-label="Çizgi çiz" className={`${cell} border-b border-[#ccc]`}>
          <svg viewBox="0 0 26 26" className="h-[26px] w-[26px]" fill="#fff" stroke="#222" strokeWidth="1.4">
            <path d="M3 23L23 3" strokeWidth="2" />
            <rect x="1.500" y="21" width="3.500" height="3.500" />
            <rect x="21" y="1.500" width="3.500" height="3.500" />
          </svg>
        </button>
        <button type="button" aria-label="Düzenle" className={cell}>
          <svg viewBox="0 0 26 24" className="h-6 w-[26px]" fill="none" stroke="#222" strokeWidth="1.800">
            <path d="M15 5H6a3.500 3.500 0 0 0-3.500 3.500V18A3.500 3.500 0 0 0 6 21.500h9A3.500 3.500 0 0 0 18.500 18v-3" />
            <path d="M9 17.500l1.500-5L20 3.500l3.200 3.200-9.500 9.500z" fill="#222" stroke="none" />
            <path d="M21 2.500l1.500-1.300 3 3L24 5.500z" fill="#222" stroke="none" />
          </svg>
        </button>
      </div>
    </div>
  );
}

function TopBar() {
  return (
    <header className="flex h-20 items-start bg-white pr-[21px] pl-[18px]">
      <a href="#" className="mt-[7px] shrink-0">
        <Logo />
      </a>
      <div className="flex flex-1 items-start gap-[31px] pt-3 pr-8 pl-[228px]">
        <div className="relative h-[47px] w-full max-w-[709px] text-[#808080]">
          <PinIcon className="pointer-events-none absolute top-[15px] left-5 h-4 w-[11px]" />
          <input
            type="text"
            aria-label="Adres Ara"
            placeholder="Adres Ara"
            className="h-full w-full rounded-full border border-[#d8dadc] bg-white pr-14 pl-[47px] text-lg outline-none placeholder:text-[#bfbfbf]"
          />
          <button type="button" aria-label="Temizle" className="absolute top-3 right-5 flex h-5 w-5 items-center justify-center">
            <FaTimes className="h-4 w-4" />
          </button>
        </div>
        <button
          type="button"
          aria-label="Ara"
          className="flex h-[45px] w-[69px] shrink-0 items-center justify-center rounded-[5px] bg-[#dfe1e3] text-[#5a5a5a]"
        >
          <SearchIcon />
        </button>
      </div>
      <button
        type="button"
        aria-label="Çıkış"
        className="mt-[15px] flex h-10 w-10 shrink-0 items-center justify-center rounded-full bg-[#0074d9] text-white"
      >
        <SignOutIcon />
      </button>
    </header>
  );
}

export default function App() {
  return (
    <div className="flex min-h-screen flex-col overflow-hidden bg-white font-[Lato,sans-serif] text-[#333]">
      <TopBar />
      <main className="relative flex flex-1 flex-col pt-[30px]">
        <MapCanvas />
        <div className="relative grid flex-1 grid-cols-[573px_minmax(0,1fr)_574px] gap-[14px] pr-3 pl-[14px]">
          <PoiPanel />
          <div className="flex items-start justify-between">
            <MapTools />
            <button
              type="button"
              aria-label="Katmanlar"
              className={`flex h-[58px] w-[58px] items-center justify-center ${FRAME} bg-white`}
            >
              <LayersIcon />
            </button>
          </div>
          <InfoPanel />
        </div>
        <footer className="relative flex h-6 items-end justify-between overflow-hidden pl-[596px] font-[Roboto,sans-serif] text-xs leading-3 whitespace-nowrap text-[#444]">
          <span className="font-[Lato,sans-serif] text-[26px] leading-6" aria-label="Google">
            <span className="text-[#4285f4]">G</span>
            <span className="text-[#ea4335]">o</span>
            <span className="text-[#fbbc05]">o</span>
            <span className="text-[#4285f4]">g</span>
          </span>
          <div className="flex bg-[#f5f5f5]/70">
            <span className="pr-3">Harita verileri ©2018 Google, Mapa GISrael, ORION-ME</span>
            <a href="#" className="border-l border-[#ddd] px-3">
              Kullanım Şartları
            </a>
            <a href="#" className="pl-1">
              Harita hat
            </a>
          </div>
        </footer>
      </main>
    </div>
  );
}
